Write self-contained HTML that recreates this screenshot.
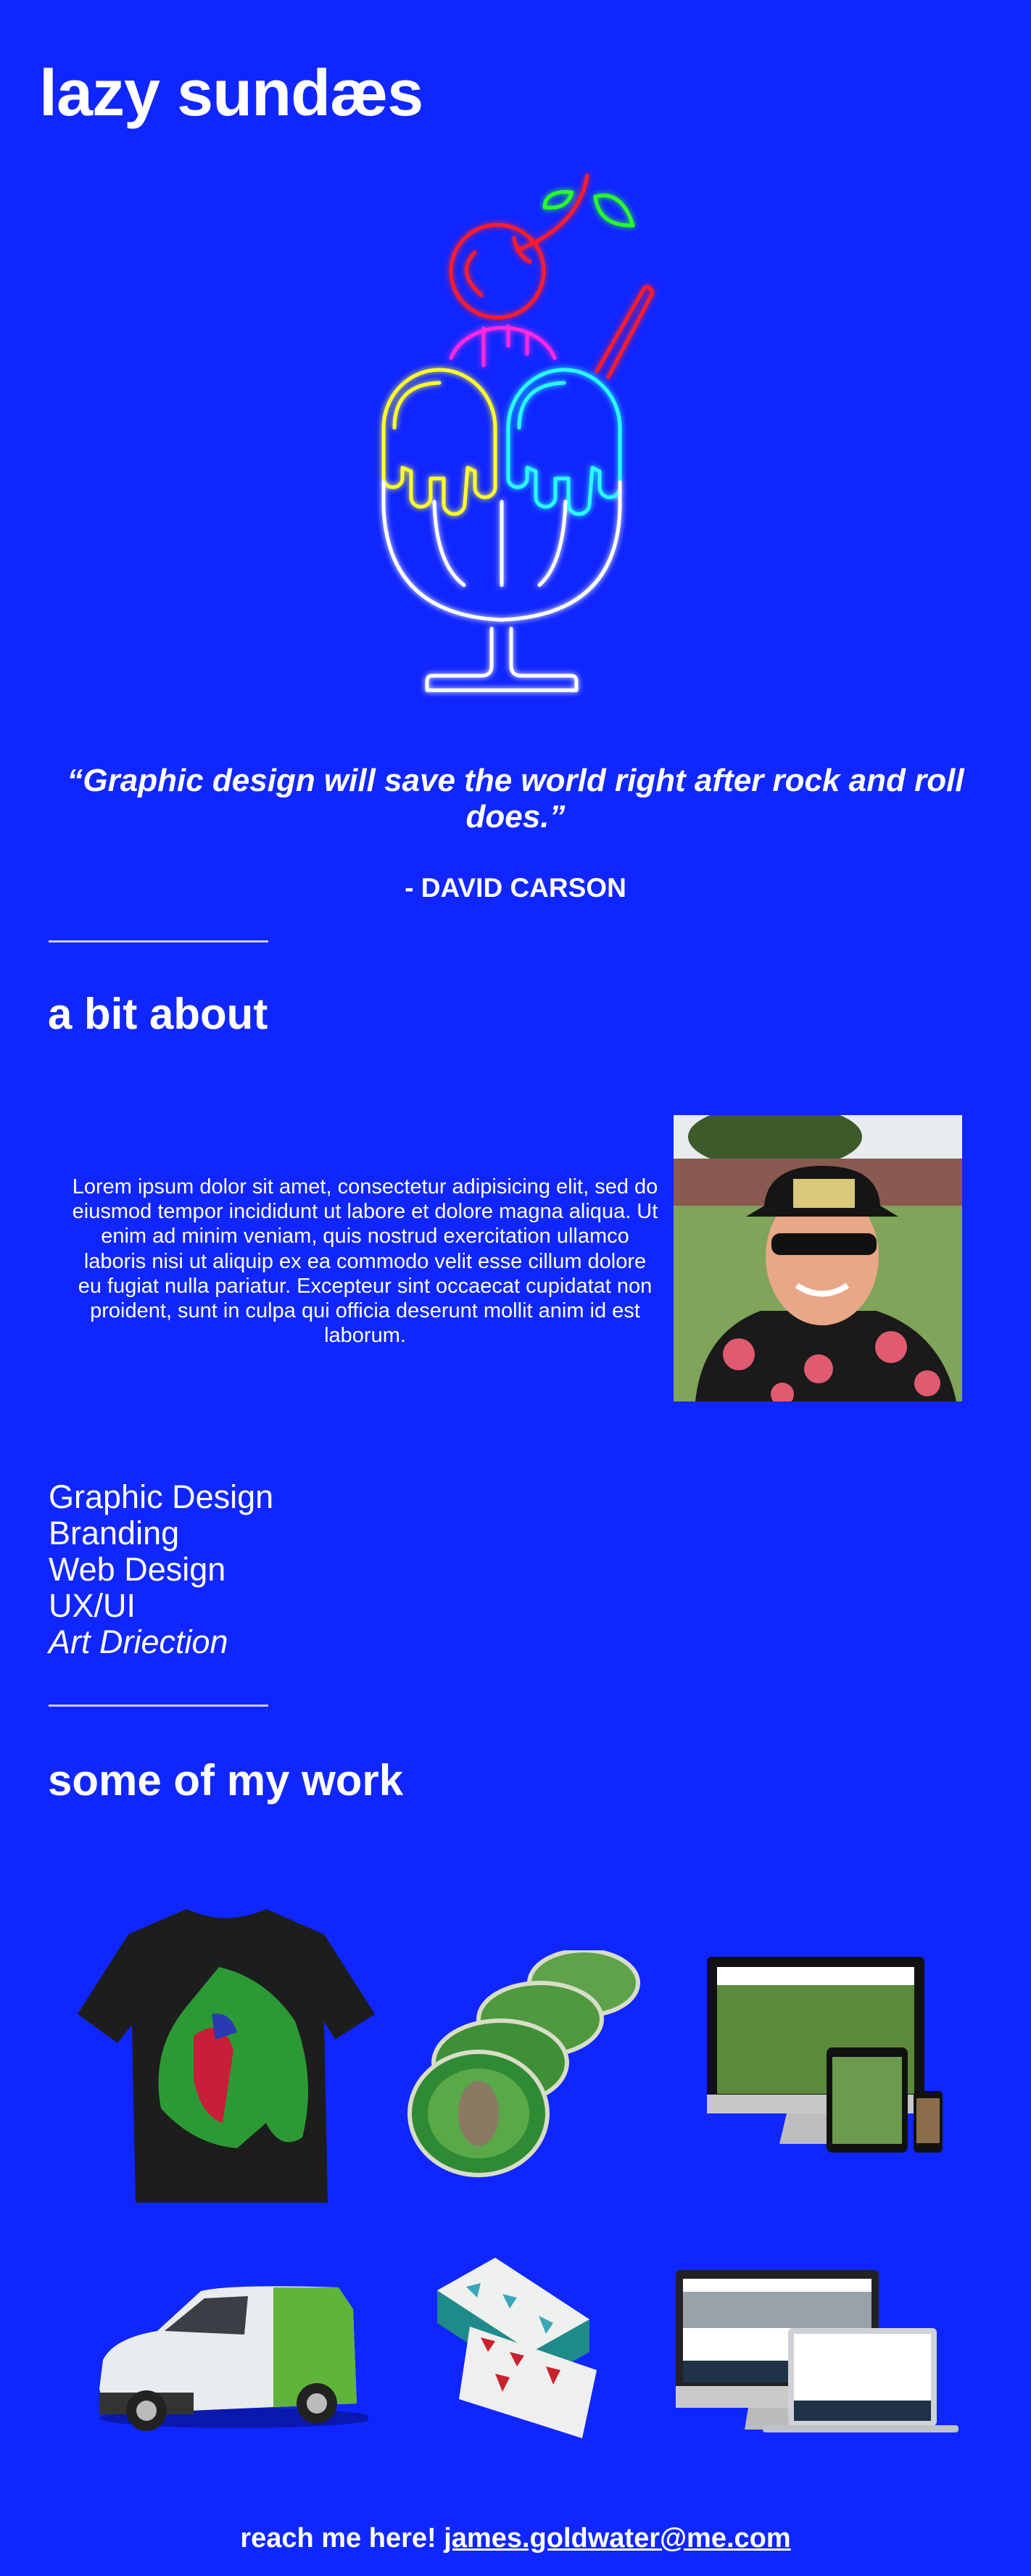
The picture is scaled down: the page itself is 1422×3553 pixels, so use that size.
<!DOCTYPE html>
<html><head><meta charset="utf-8">
<style>
html,body{margin:0;padding:0}
body{width:1422px;height:3553px;background:#1026ff;position:relative;overflow:hidden;font-family:"Liberation Sans",Arial,sans-serif;color:#fff}
.a{position:absolute}
h1{position:absolute;left:54px;top:74px;margin:0;font-size:90px;font-weight:bold;line-height:110px;letter-spacing:-1px}
.quote{left:56px;width:1310px;top:1052px;text-align:center;font-style:italic;font-weight:bold;font-size:44px;line-height:50px}
.carson{left:0;width:1422px;top:1203px;text-align:center;font-weight:bold;font-size:37px;line-height:44px}
.hr{left:67px;width:303px;height:3px;background:#c9ccf6}
.h2{left:66px;font-weight:bold;font-size:60px;line-height:70px}
.para{left:96px;width:815px;top:1620px;text-align:center;font-size:29px;line-height:34.2px}
.svc{left:67px;top:2040px;font-size:45px;line-height:50px}
.foot{left:0;width:1422px;top:3478px;text-align:center;font-weight:bold;font-size:38px;line-height:46px}
.foot span{text-decoration:underline}
</style></head><body>
<h1>lazy sundæs</h1>

<svg class="a" style="left:0;top:0" width="1422" height="1000" viewBox="0 0 1422 1000">
<defs><filter id="g" x="-30%" y="-30%" width="160%" height="160%"><feGaussianBlur stdDeviation="4" result="b"/><feMerge><feMergeNode in="b"/><feMergeNode in="SourceGraphic"/></feMerge></filter></defs>
<g fill="none" stroke-width="5" stroke-linecap="round" stroke-linejoin="round" filter="url(#g)">
<g stroke="#ff1a2a">
<circle cx="686" cy="374" r="64"/>
<path d="M655,348 Q628,376 664,407"/>
<path d="M810,242 Q798,312 716,344"/>
<path d="M709,328 Q712,351 731,361"/>
<path d="M823,512 L886,402 Q893,388 900,404 L839,520"/>
</g>
<g stroke="#2aff2a">
<path d="M751,286 Q752,262 789,265 Q782,290 751,286 Z"/>
<path d="M821,271 Q858,262 873,311 Q826,312 821,271 Z"/>
</g>
<g stroke="#ff2adf">
<path d="M622,494 A75,60 0 0 1 765,494"/>
<path d="M667,453 L667,504 M701,450 L701,477 M727,459 L727,488"/>
</g>
<g stroke="#ffff2a">
<path d="M683,590 L683,672 A14,14 0 0 1 655,672 L655,650 L645,645 L641,695 A14.5,14 0 0 1 612,695 L612,660 L594,660 L594,686 A13.5,13 0 0 1 567,686 L567,650 L555,645 L555,660 A13,12 0 0 1 529,660 L529,590 A77,80 0 0 1 683,590 Z"/>
<path d="M544,590 Q544,530 606,528"/>
</g>
<g stroke="#2affff" transform="translate(172,0)">
<path d="M683,590 L683,672 A14,14 0 0 1 655,672 L655,650 L645,645 L641,695 A14.5,14 0 0 1 612,695 L612,660 L594,660 L594,686 A13.5,13 0 0 1 567,686 L567,650 L555,645 L555,660 A13,12 0 0 1 529,660 L529,590 A77,80 0 0 1 683,590 Z"/>
<path d="M544,590 Q544,530 606,528"/>
</g>
<g stroke="#ffffff">
<path d="M529,665 L529,700 Q535,848 692,855 Q852,848 855,700 L855,665"/>
<path d="M599,692 Q601,778 640,807"/>
<path d="M692,692 L692,807"/>
<path d="M780,692 Q777,778 744,807"/>
<path d="M678,867 L678,918 Q678,932 664,932 L596,932 Q589,932 589,940 L589,952 L795,952 L795,940 Q795,932 788,932 L719,932 Q705,932 705,918 L705,867"/>
</g>
</g>
</svg>

<div class="a quote">“Graphic design will save the world right after rock and roll does.”</div>
<div class="a carson">- DAVID CARSON</div>
<div class="a hr" style="top:1297px"></div>
<div class="a h2" style="top:1364px">a bit about</div>
<div class="a para">Lorem ipsum dolor sit amet, consectetur adipisicing elit, sed do eiusmod tempor incididunt ut labore et dolore magna aliqua. Ut enim ad minim veniam, quis nostrud exercitation ullamco laboris nisi ut aliquip ex ea commodo velit esse cillum dolore eu fugiat nulla pariatur. Excepteur sint occaecat cupidatat non proident, sunt in culpa qui officia deserunt mollit anim id est laborum.</div>

<svg class="a" style="left:929px;top:1538px" width="398" height="395" viewBox="0 0 398 395">
<rect width="398" height="395" fill="#e8ecef"/>
<ellipse cx="140" cy="30" rx="120" ry="45" fill="#3d5a2a"/>
<rect x="0" y="60" width="398" height="70" fill="#8a5a50"/>
<rect x="0" y="125" width="398" height="270" fill="#7fa45a"/>
<path d="M30,395 Q40,300 120,270 L280,270 Q370,300 390,395 Z" fill="#1a1a1a"/>
<g fill="#e05a70"><circle cx="90" cy="330" r="22"/><circle cx="200" cy="350" r="20"/><circle cx="300" cy="320" r="22"/><circle cx="350" cy="370" r="18"/><circle cx="150" cy="385" r="16"/></g>
<ellipse cx="205" cy="195" rx="78" ry="95" fill="#e8a787"/>
<path d="M125,125 Q130,70 205,70 Q282,70 285,125 L310,140 L100,140 Z" fill="#151515"/>
<rect x="165" y="88" width="85" height="40" fill="#d9c77a"/>
<rect x="135" y="163" width="145" height="30" rx="12" fill="#111"/>
<path d="M170,235 Q205,258 240,235" stroke="#fff" stroke-width="8" fill="none"/>
</svg>

<div class="a svc">Graphic Design<br>Branding<br>Web Design<br>UX/UI<br><i>Art Driection</i></div>
<div class="a hr" style="top:2351px"></div>
<div class="a h2" style="top:2421px">some of my work</div>

<svg class="a" style="left:107px;top:2628px" width="410" height="413" viewBox="0 0 410 413">
<path d="M150,5 Q205,30 260,5 L340,40 L410,150 L355,185 L340,160 L345,410 L80,410 L75,165 L55,190 L0,150 L70,40 Z" fill="#1d1d1d"/>
<path d="M195,85 Q260,100 300,160 Q330,240 310,320 Q280,340 260,300 L220,335 Q160,330 115,280 Q100,200 150,140 Z" fill="#2c9a34"/>
<path d="M160,180 Q200,150 215,200 L200,300 Q170,290 160,240 Z" fill="#c81e3a"/>
<path d="M185,150 Q210,145 220,175 L190,185 Z" fill="#2a3ab0"/>
</svg>
<svg class="a" style="left:550px;top:2690px" width="334" height="314" viewBox="0 0 334 314">
<g stroke="#d8ddc8" stroke-width="6">
<ellipse cx="255" cy="45" rx="75" ry="45" fill="#5ea24a"/>
<ellipse cx="195" cy="95" rx="85" ry="50" fill="#4f9a3e"/>
<ellipse cx="140" cy="155" rx="92" ry="58" fill="#3f8f36"/>
<ellipse cx="110" cy="225" rx="95" ry="85" fill="#2f8a34"/>
</g>
<ellipse cx="110" cy="225" rx="70" ry="62" fill="#5aa948"/>
<ellipse cx="110" cy="225" rx="28" ry="45" fill="#8b7a62"/>
</svg>
<svg class="a" style="left:975px;top:2699px" width="326" height="274" viewBox="0 0 326 274">
<rect x="0" y="0" width="300" height="215" rx="6" fill="#111"/>
<rect x="14" y="14" width="272" height="25" fill="#fff"/>
<rect x="14" y="39" width="272" height="150" fill="#5b8a3a"/>
<rect x="0" y="190" width="300" height="26" fill="#c8c8c8"/>
<path d="M110,216 L190,216 L200,258 L100,258 Z" fill="#bdbdbd"/>
<rect x="165" y="125" width="112" height="145" rx="8" fill="#111"/>
<rect x="173" y="138" width="96" height="120" fill="#6d9b4e"/>
<rect x="285" y="185" width="40" height="85" rx="6" fill="#111"/>
<rect x="289" y="195" width="32" height="62" fill="#8a6e4a"/>
</svg>
<svg class="a" style="left:127px;top:3145px" width="381" height="211" viewBox="0 0 381 211">
<ellipse cx="200" cy="190" rx="190" ry="14" fill="#0a18b0"/>
<path d="M10,150 L15,110 Q30,80 90,70 L150,15 Q190,5 340,10 L360,40 L365,170 L20,185 Z" fill="#e9ecef"/>
<path d="M250,10 L340,10 L360,40 L365,170 L250,175 Z" fill="#5fb43a"/>
<path d="M100,70 L155,25 L215,22 L210,75 Z" fill="#3a3f46"/>
<rect x="10" y="155" width="130" height="30" fill="#333"/>
<circle cx="75" cy="180" r="28" fill="#222"/><circle cx="75" cy="180" r="14" fill="#bbb"/>
<circle cx="310" cy="170" r="28" fill="#222"/><circle cx="310" cy="170" r="14" fill="#bbb"/>
</svg>
<svg class="a" style="left:603px;top:3114px" width="238" height="249" viewBox="0 0 238 249">
<path d="M0,45 L80,0 L210,85 L210,130 L130,175 L0,90 Z" fill="#1f8a8a"/>
<path d="M0,45 L80,0 L210,85 L130,130 Z" fill="#eef1ee"/>
<path d="M45,95 L220,155 L200,249 L30,195 Z" fill="#efefef"/>
<g fill="#c8222c"><path d="M60,110 L80,115 L70,130 Z"/><path d="M100,130 L120,135 L110,150 Z"/><path d="M150,150 L170,155 L160,175 Z"/><path d="M80,160 L100,165 L90,185 Z"/></g>
<g fill="#3aa7b8"><path d="M40,40 L60,35 L55,55 Z"/><path d="M90,50 L110,55 L100,70 Z"/><path d="M140,80 L160,90 L150,105 Z"/></g>
</svg>
<svg class="a" style="left:932px;top:3131px" width="390" height="229" viewBox="0 0 390 229">
<rect x="0" y="0" width="280" height="190" rx="6" fill="#222"/>
<rect x="10" y="12" width="260" height="140" fill="#fff"/>
<rect x="10" y="30" width="260" height="50" fill="#9aa1a8"/>
<rect x="10" y="125" width="260" height="30" fill="#1f3248"/>
<rect x="0" y="160" width="280" height="30" fill="#c9c9c9"/>
<path d="M100,190 L180,190 L185,220 L95,220 Z" fill="#bbb"/>
<rect x="155" y="80" width="205" height="135" rx="6" fill="#cfd2d6"/>
<rect x="163" y="88" width="189" height="120" fill="#fff"/>
<rect x="163" y="180" width="189" height="28" fill="#1f3248"/>
<rect x="120" y="214" width="270" height="10" rx="4" fill="#bfc3c7"/>
</svg>

<div class="a foot">reach me here! <span>james.goldwater@me.com</span></div>
</body></html>
